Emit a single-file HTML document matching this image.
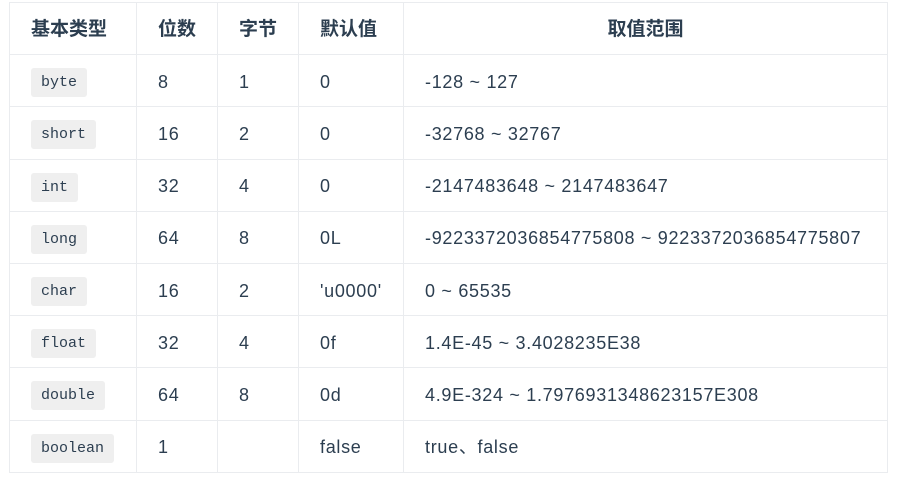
<!DOCTYPE html>
<html><head><meta charset="utf-8"><style>
body{margin:0;background:#fff;font-family:"Liberation Sans","Noto Sans CJK SC",sans-serif;color:#2c3e50;}
table{position:absolute;left:9px;top:2px;border-collapse:collapse;width:879px;}
tr{height:52.2px;}
td,th{border:1px solid #eaecef;padding:0 0 0 21px;text-align:left;font-size:18px;letter-spacing:0.7px;line-height:20px;vertical-align:middle;}
td{padding-top:2px;}
th{font-weight:bold;font-size:19px;letter-spacing:0;padding-top:2px;}
th.c{text-align:center;padding:2px 0 0 0;}
code{display:inline-block;position:relative;top:1px;font-family:"Liberation Mono",monospace;font-size:15px;line-height:29px;letter-spacing:0;background:#efefef;border-radius:3px;padding:0 10px;color:#2c3e50;vertical-align:middle;}
</style></head><body>
<table>
<colgroup><col style="width:127px"><col style="width:81px"><col style="width:81px"><col style="width:105px"><col></colgroup>
<tr><th>基本类型</th><th>位数</th><th>字节</th><th>默认值</th><th class="c">取值范围</th></tr>
<tr><td><code>byte</code></td><td>8</td><td>1</td><td>0</td><td>-128 ~ 127</td></tr>
<tr><td><code>short</code></td><td>16</td><td>2</td><td>0</td><td>-32768 ~ 32767</td></tr>
<tr><td><code>int</code></td><td>32</td><td>4</td><td>0</td><td>-2147483648 ~ 2147483647</td></tr>
<tr><td><code>long</code></td><td>64</td><td>8</td><td>0L</td><td>-9223372036854775808 ~ 9223372036854775807</td></tr>
<tr><td><code>char</code></td><td>16</td><td>2</td><td>'u0000'</td><td>0 ~ 65535</td></tr>
<tr><td><code>float</code></td><td>32</td><td>4</td><td>0f</td><td>1.4E-45 ~ 3.4028235E38</td></tr>
<tr><td><code>double</code></td><td>64</td><td>8</td><td>0d</td><td>4.9E-324 ~ 1.7976931348623157E308</td></tr>
<tr><td><code>boolean</code></td><td>1</td><td></td><td>false</td><td>true、false</td></tr>
</table>
</body></html>
